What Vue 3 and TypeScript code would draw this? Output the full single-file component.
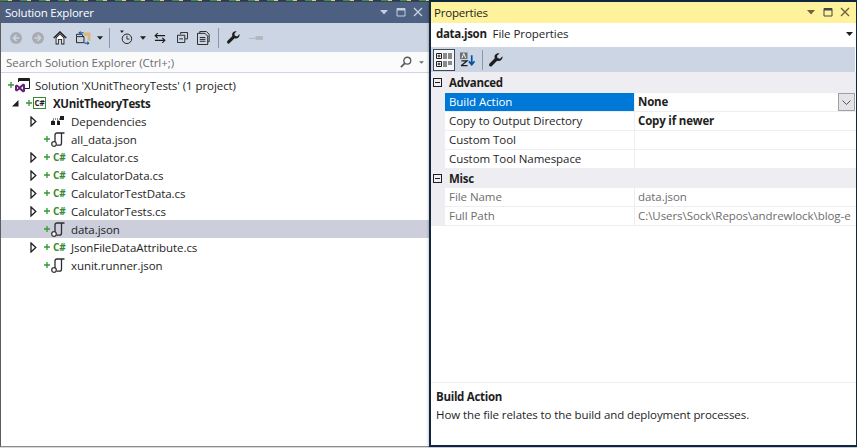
<script setup lang="ts">
interface TreeRow {
  label: string
  level: number
  icon: 'solution' | 'project' | 'deps' | 'json' | 'cs'
  arrow?: 'open' | 'closed'
  plus?: boolean
  bold?: boolean
  selected?: boolean
}

interface PropRow {
  label: string
  value?: string
  selected?: boolean
  strong?: boolean
  muted?: boolean
}

interface PropGroup {
  name: string
  rows: PropRow[]
}

const treeRows: TreeRow[] = [
  { label: "Solution 'XUnitTheoryTests' (1 project)", level: 0, icon: 'solution', plus: true },
  { label: 'XUnitTheoryTests', level: 1, icon: 'project', arrow: 'open', plus: true, bold: true },
  { label: 'Dependencies', level: 2, icon: 'deps', arrow: 'closed' },
  { label: 'all_data.json', level: 2, icon: 'json', plus: true },
  { label: 'Calculator.cs', level: 2, icon: 'cs', arrow: 'closed', plus: true },
  { label: 'CalculatorData.cs', level: 2, icon: 'cs', arrow: 'closed', plus: true },
  { label: 'CalculatorTestData.cs', level: 2, icon: 'cs', arrow: 'closed', plus: true },
  { label: 'CalculatorTests.cs', level: 2, icon: 'cs', arrow: 'closed', plus: true },
  { label: 'data.json', level: 2, icon: 'json', plus: true, selected: true },
  { label: 'JsonFileDataAttribute.cs', level: 2, icon: 'cs', arrow: 'closed', plus: true },
  { label: 'xunit.runner.json', level: 2, icon: 'json', plus: true }
]

const propGroups: PropGroup[] = [
  {
    name: 'Advanced',
    rows: [
      { label: 'Build Action', value: 'None', selected: true, strong: true },
      { label: 'Copy to Output Directory', value: 'Copy if newer', strong: true },
      { label: 'Custom Tool' },
      { label: 'Custom Tool Namespace' }
    ]
  },
  {
    name: 'Misc',
    rows: [
      { label: 'File Name', value: 'data.json', muted: true },
      { label: 'Full Path', value: 'C:\\Users\\Sock\\Repos\\andrewlock\\blog-e', muted: true }
    ]
  }
]
</script>

<template>
  <div class="screen">
    <!-- Solution Explorer -->
    <section class="explorer">
      <div class="top-sliver"></div>
      <header class="title-bar title-bar--dark">
        <span class="title-text">Solution Explorer</span>
        <span class="win-btns">
          <svg width="10" height="10" viewBox="0 0 10 10"><path d="M1 3h8L5 7.500z" fill="#c5cede" /></svg>
          <svg width="10" height="10" viewBox="0 0 10 10"><path d="M1 1.500h8v7.500H1z" fill="none" stroke="#c5cede" /><path d="M1 2.500h8" stroke="#c5cede" stroke-width="2" /></svg>
          <svg width="10" height="10" viewBox="0 0 10 10"><path d="M1 1l8 8M9 1l-8 8" stroke="#c5cede" stroke-width="1.400" /></svg>
        </span>
      </header>
      <div class="toolbar">
        <svg class="tb-ico tb-back" width="12" height="12" viewBox="0 0 14 14"><circle cx="7" cy="7" r="7" fill="#a9adb3" /><path d="M11 7H4.500M7.500 3.500L4 7l3.500 3.500" fill="none" stroke="#ccd5e3" stroke-width="1.800" /></svg>
        <svg class="tb-ico tb-fwd" width="12" height="12" viewBox="0 0 14 14"><circle cx="7" cy="7" r="7" fill="#a9adb3" /><path d="M3 7h6.500M6.500 3.500L10 7l-3.500 3.500" fill="none" stroke="#ccd5e3" stroke-width="1.800" /></svg>
        <svg class="tb-ico tb-home" width="14" height="14" viewBox="0 0 15 15"><path d="M.8 7.600L7.500 1l6.700 6.600" fill="none" stroke="#1e1e1e" stroke-width="1.500" /><path d="M2.800 7v7.500h3.400v-5h2.600v5h3.400V7L7.500 2.500z" fill="#1e1e1e" /><path d="M3.800 7.400v6.100h1.400v-5h4.600v5h1.400V7.400L7.500 3.800z" fill="#fff" /></svg>
        <svg class="tb-ico tb-sync" width="15" height="14" viewBox="0 0 16 15"><path d="M8.500 1.500h7v9h-3V5h-4z" fill="#dcb67a" /><path d="M.5 6V3.500h6l1 2.500h1v6.500h-8z" fill="#ccd5e3" stroke="#1e1e1e" /><path d="M1 6h7" stroke="#1e1e1e" /><path d="M5 0L2.500 2 5 4z" fill="#00539c" /><path d="M5 2h3" stroke="#00539c" stroke-width="1.200" /><path d="M12 15l2.500-2-2.500-2z" fill="#00539c" /><path d="M12 13H9" stroke="#00539c" stroke-width="1.200" /></svg>
        <svg class="tb-ico tb-drop" width="6" height="4" viewBox="0 0 7 4"><path d="M0 0h7L3.500 4z" fill="#1e1e1e" /></svg>
        <i class="tb-sep"></i>
        <svg class="tb-ico tb-clock" width="13" height="15" viewBox="0 0 15 16"><path d="M0 0h4.500L2.200 2.800z" fill="#1e1e1e" /><circle cx="8" cy="9.500" r="5.500" fill="none" stroke="#1e1e1e" stroke-width="1.100" /><path d="M8 6v3.800h3" fill="none" stroke="#1e1e1e" /></svg>
        <svg class="tb-ico tb-drop2" width="6" height="4" viewBox="0 0 7 4"><path d="M0 0h7L3.500 4z" fill="#1e1e1e" /></svg>
        <svg class="tb-ico tb-arrows" width="12" height="12" viewBox="0 0 13 12"><path d="M1 3.500h11M4 .8L1.300 3.500 4 6.200" fill="none" stroke="#1e1e1e" stroke-width="1.300" /><path d="M12 8.500H1M9 5.800l2.700 2.700L9 11.200" fill="none" stroke="#1e1e1e" stroke-width="1.300" /></svg>
        <svg class="tb-ico tb-collapse" width="11" height="11" viewBox="0 0 12 12"><path d="M4 2.500V.5h7.500v7H9" fill="none" stroke="#1e1e1e" /><path d="M.5 3.500h8v8h-8z" fill="#ccd5e3" stroke="#1e1e1e" /><path d="M2.500 7.500h4" stroke="#1e1e1e" /></svg>
        <svg class="tb-ico tb-copies" width="14" height="14" viewBox="0 0 15 15"><path d="M3 2.500V.5h7l3 3v8h-1" fill="none" stroke="#1e1e1e" /><path d="M.5 2.500h8l3 3v9h-11z" fill="#ccd5e3" stroke="#1e1e1e" /><path d="M3 7h6M3 9h6M3 11h6" stroke="#1e1e1e" /></svg>
        <i class="tb-sep tb-sep--second"></i>
        <svg class="tb-ico tb-wrench" width="13" height="13" viewBox="0 0 14 14"><path d="M13.500 3.300L11 5.800 8.500 5 8 2.800 10.500.4C8.500-.3 5.500 1 5.500 3.800c0 .7.100 1.100.3 1.500L.6 10.600c-.8 1-.7 1.800-.1 2.500.7.700 1.600.7 2.400-.1l5.300-5.300c2.800 1 5.800-1 5.300-4.400z" fill="#1e1e1e" /></svg>
        <svg class="tb-ico tb-pin" width="14" height="6" viewBox="0 0 15 6"><path d="M0 3.500h7" stroke="#b3b7bd" /><path d="M7 1h8v4H7z" fill="#b3b7bd" /></svg>
      </div>
      <div class="search">
        <span>Search Solution Explorer (Ctrl+;)</span>
        <span class="search-tail">
          <svg width="12" height="12" viewBox="0 0 14 14"><circle cx="8.500" cy="5.500" r="4" fill="none" stroke="#5a5a5a" stroke-width="1.600" /><path d="M5.500 8.500L1 13" stroke="#5a5a5a" stroke-width="2" /></svg>
          <svg width="5" height="3" viewBox="0 0 6 3"><path d="M0 0h6L3 3z" fill="#6d6d6d" /></svg>
        </span>
      </div>
      <div class="tree">
        <div
          v-for="row in treeRows"
          :key="row.label"
          class="tree-row"
          :class="{ 'tree-row--selected': row.selected, 'tree-row--bold': row.bold }"
          :style="{ paddingLeft: `${5 + row.level * 18}px` }"
        >
          <span v-if="row.arrow" class="arrow">
            <svg v-if="row.arrow === 'open'" width="8" height="8" viewBox="0 0 8 8"><path d="M7.500 1v6.500H1z" fill="#1e1e1e" /></svg>
            <svg v-else width="7" height="11" viewBox="0 0 7 11"><path d="M1 1l4.800 4.500L1 10z" fill="#fff" stroke="#1e1e1e" stroke-width="1.300" /></svg>
          </span>
          <span class="plus">
            <svg v-if="row.plus" width="6" height="6" viewBox="0 0 6 6"><path d="M0 3h6M3 0v6" stroke="#339933" stroke-width="1.300" /></svg>
          </span>
          <span class="row-ico">
            <svg v-if="row.icon === 'solution'" class="sln-ico" width="18" height="16" viewBox="0 0 18 16">
              <path d="M4.500 5V1.500h11v10H11" fill="none" stroke="#1e1e1e" />
              <path d="M4.500 3h11" stroke="#1e1e1e" stroke-width="2" />
              <path d="M1 8.500l2-1 2.500 2L9 6.500l2 1v7l-2 1-3.500-3-2.500 2-2-1zM3 9.800v2.400l1.300-1.200zM9 9.200L7 11l2 1.800z" fill="#68217a" />
            </svg>
            <span v-else-if="row.icon === 'project'" class="cs-box">C#</span>
            <svg v-else-if="row.icon === 'deps'" width="13" height="10" viewBox="0 0 13 10">
              <path d="M0 5h4v4H0zM6 5h3v4H6zM9 0h4v4H9z" fill="#1e1e1e" />
              <path d="M2 5V3h8M7 5V3" stroke="#1e1e1e" stroke-dasharray="1 1" fill="none" />
            </svg>
            <svg v-else-if="row.icon === 'json'" width="14" height="15" viewBox="0 0 14 15">
              <path d="M4 10V3C4 1.600 4.800 1 6 1h7.500M10.500 1.200V11c0 1.400-.8 2.200-2 2.200H5.500" fill="none" stroke="#2d2d2d" stroke-width="1.300" />
              <circle cx="3" cy="12" r="2.300" fill="#fff" stroke="#3c3c3c" stroke-width="1.300" />
            </svg>
            <span v-else class="cs-text">C#</span>
          </span>
          <span class="row-label">{{ row.label }}</span>
        </div>
      </div>
    </section>

    <!-- Properties -->
    <section class="props">
      <header class="title-bar title-bar--active">
        <span class="title-text">Properties</span>
        <span class="win-btns">
          <svg width="10" height="10" viewBox="0 0 10 10"><path d="M1 3h8L5 7.500z" fill="#6b6340" /></svg>
          <svg width="10" height="10" viewBox="0 0 10 10"><path d="M1 1.500h8v7.500H1z" fill="none" stroke="#454545" /><path d="M1 2.500h8" stroke="#454545" stroke-width="2" /></svg>
          <svg width="10" height="10" viewBox="0 0 10 10"><path d="M1 1l8 8M9 1l-8 8" stroke="#6b6340" stroke-width="1.400" /></svg>
        </span>
      </header>
      <div class="target">
        <span><b>data.json</b>&nbsp; File Properties</span>
        <svg width="7" height="4" viewBox="0 0 7 4"><path d="M0 0h7L3.500 4z" fill="#1e1e1e" /></svg>
      </div>
      <div class="prop-tools">
        <span class="prop-tool prop-tool--on">
          <svg width="16" height="14" viewBox="0 0 16 14">
            <path d="M.5.500h5v5h-5zM.5 8.500h5v5h-5z" fill="#fff" stroke="#1e1e1e" />
            <path d="M1.500 3h3M3 1.500v3M1.500 11h3M3 9.500v3" stroke="#1e1e1e" />
            <path d="M7 1h9M7 3h9M7 5h9M7 9h9M7 11h9M7 13h5" stroke="#1e1e1e" stroke-dasharray="4 1" />
          </svg>
        </span>
        <svg class="az" width="15" height="15" viewBox="0 0 16 15">
          <rect width="8" height="7" fill="#6d6f73" />
          <path d="M1 14h7M1.500 9h6L1.500 14" fill="none" stroke="#1e1e1e" stroke-width="1.400" />
          <path d="M2 6l2-5 2 5" fill="none" stroke="#fff" />
          <path d="M12.500 3v10M9.500 9.500l3 3.500 3-3.500" fill="none" stroke="#00539c" stroke-width="1.800" />
        </svg>
        <i class="tb-sep prop-sep"></i>
        <svg class="prop-wrench" width="14" height="14" viewBox="0 0 14 14"><path d="M13.500 3.300L11 5.800 8.500 5 8 2.800 10.500.4C8.500-.3 5.500 1 5.500 3.800c0 .7.100 1.100.3 1.500L.6 10.600c-.8 1-.7 1.800-.1 2.500.7.700 1.600.7 2.400-.1l5.300-5.300c2.800 1 5.800-1 5.300-4.400z" fill="#1e1e1e" /></svg>
      </div>
      <div class="grid">
        <template v-for="group in propGroups" :key="group.name">
          <div class="group-row">
            <span class="minus"></span>
            <b>{{ group.name }}</b>
          </div>
          <div
            v-for="row in group.rows"
            :key="row.label"
            class="prop-row"
            :class="{ 'prop-row--muted': row.muted }"
          >
            <span class="prop-name" :class="{ 'prop-name--selected': row.selected }">{{ row.label }}</span>
            <span class="prop-value" :class="{ 'prop-value--strong': row.strong }">
              <span class="prop-value-text">{{ row.value }}</span>
              <span v-if="row.selected" class="combo">
                <svg width="9" height="5" viewBox="0 0 9 5"><path d="M.5.500l4 4 4-4" fill="none" stroke="#555" /></svg>
              </span>
            </span>
          </div>
        </template>
      </div>
      <div class="desc">
        <b>Build Action</b>
        <span class="desc-text">How the file relates to the build and deployment processes.</span>
      </div>
    </section>
  </div>
</template>

<style>
html,
body {
  margin: 0;
  background: #d3d9e1;
}
</style>

<style scoped>
.screen {
  width: 857px;
  height: 448px;
  overflow: hidden;
  display: flex;
  align-items: flex-start;
  font-family: "Open Sans", "Liberation Sans", sans-serif;
  font-size: 11.5px;
  letter-spacing: -0.06px;
  color: #1e1e1e;
  background: #d3d9e1;
}

b {
  letter-spacing: -0.3px;
}

.title-text {
  letter-spacing: -0.2px;
}

.explorer {
  width: 429px;
  height: 447px;
  flex: none;
  display: flex;
  flex-direction: column;
  background: #fff;
  border-left: 1px solid #5c5c5c;
  border-bottom: 1px solid #8d8d8d;
  box-sizing: border-box;
}

.top-sliver {
  height: 1px;
  flex: none;
  background: repeating-linear-gradient(90deg, #3f8f3f 0 7px, #d8d36a 7px 11px, #2e3a4c 11px 19px);
  border-bottom: 1px solid #33415a;
}

.props {
  width: 428px;
  height: 447px;
  flex: none;
  display: flex;
  flex-direction: column;
  background: #fff;
  border: 1px solid #10263f;
  border-width: 2px 1px 2px 2px;
  box-sizing: border-box;
  box-shadow: -1px 0 2px rgba(0, 0, 0, 0.2);
}

.title-bar {
  height: 21px;
  flex: none;
  display: flex;
  align-items: center;
  justify-content: space-between;
  padding: 0 6px 1px 3px;
  box-sizing: border-box;
}

.title-bar--dark {
  background: #4d6082;
  color: #fff;
  padding-left: 4px;
}

.title-bar--active {
  background: #fff29d;
  color: #1e1e1e;
}

.win-btns {
  display: flex;
  gap: 7px;
  align-items: center;
}

.toolbar {
  height: 29px;
  flex: none;
  display: flex;
  align-items: center;
  background: #ccd5e3;
}

.tb-ico {
  display: block;
  flex: none;
}

.tb-back { margin-left: 9px; }
.tb-fwd { margin-left: 10px; }
.tb-home { margin-left: 9px; }
.tb-sync { margin-left: 9px; }
.tb-drop { margin-left: 6px; }
.tb-clock { margin-left: 10px; }
.tb-drop2 { margin-left: 7px; }
.tb-arrows { margin-left: 8px; }
.tb-collapse { margin-left: 11px; }
.tb-copies { margin-left: 9px; }
.tb-wrench { margin-left: 8px; }
.tb-pin { margin-left: 9px; }

.tb-sep {
  display: block;
  flex: none;
  width: 1px;
  height: 20px;
  background: #8a97aa;
  margin-left: 6px;
}

.tb-sep--second {
  margin-left: 7px;
}

.search {
  height: 21px;
  flex: none;
  display: flex;
  align-items: center;
  justify-content: space-between;
  padding: 0 5px 0 5px;
  box-sizing: border-box;
  background: #fbfbfc;
  border-bottom: 1px solid #ccd5e3;
  color: #6d6d6d;
}

.search-tail {
  display: flex;
  align-items: center;
  gap: 7px;
}

.tree {
  flex: 1;
  padding-top: 3px;
}

.tree-row {
  height: 18px;
  display: flex;
  align-items: center;
  white-space: nowrap;
  box-sizing: border-box;
}

.tree-row--selected {
  background: #ccceDB;
}

.row-label {
  padding-top: 1px;
}

.tree-row--bold .row-label {
  font-weight: 700;
  letter-spacing: -0.3px;
}

.arrow {
  width: 18px;
  margin-left: -18px;
  display: flex;
  align-items: center;
  justify-content: center;
  flex: none;
}

.plus {
  width: 9px;
  flex: none;
  display: flex;
  align-items: center;
  padding-left: 2px;
  box-sizing: border-box;
}

.row-ico {
  width: 20px;
  flex: none;
  display: flex;
  align-items: center;
}

.sln-ico {
  margin-left: -1px;
}

.cs-box {
  width: 11px;
  height: 10px;
  border: 1px solid #388a34;
  font-size: 8px;
  font-weight: 700;
  line-height: 10px;
  text-align: center;
  color: #1e1e1e;
  box-sizing: content-box;
}

.cs-text {
  margin-left: 2px;
  color: #388a34;
  font-size: 10px;
  font-weight: 700;
  line-height: 1;
}

.target {
  height: 24px;
  flex: none;
  display: flex;
  align-items: center;
  justify-content: space-between;
  padding: 0 3px 3px 5px;
  box-sizing: border-box;
}

.prop-tools {
  height: 25px;
  flex: none;
  display: flex;
  align-items: center;
  background: #ccd5e3;
  margin-right: 1px;
}

.prop-tool {
  width: 22px;
  height: 22px;
  margin-left: 2px;
  display: flex;
  align-items: center;
  justify-content: center;
  box-sizing: border-box;
}

.prop-tool--on {
  border: 1px solid #3e4a5c;
  background: #f5f6f8;
}

.az {
  margin-left: 5px;
}

.prop-sep {
  margin-left: 7px;
}

.prop-wrench {
  margin-left: 6px;
}

.grid {
  flex: 1;
  background: #fff;
}

.group-row {
  height: 19px;
  display: flex;
  align-items: center;
  background: #eeeef2;
  padding-left: 2px;
}

.group-row:first-child {
  height: 21px;
}

.minus {
  width: 7px;
  height: 7px;
  border: 1px solid #1e1e1e;
  margin-right: 7px;
  position: relative;
  box-sizing: content-box;
}

.minus::after {
  content: "";
  position: absolute;
  left: 1px;
  right: 1px;
  top: 3px;
  height: 1px;
  background: #1e1e1e;
}

.prop-row {
  height: 19px;
  display: flex;
  margin-left: 14px;
  box-shadow: -14px 0 0 #eeeef2;
  border-bottom: 1px solid #eeeef2;
  box-sizing: border-box;
}

.prop-row--muted {
  color: #6d6d6d;
}

.prop-name {
  width: 189px;
  flex: none;
  padding-left: 4px;
  box-sizing: border-box;
  line-height: 17px;
  white-space: nowrap;
}

.prop-name--selected {
  background: #0078d7;
  color: #fff;
}

.prop-value {
  flex: 1;
  min-width: 0;
  display: flex;
  justify-content: space-between;
  padding-left: 3px;
  border-left: 1px solid #eeeef2;
  line-height: 17px;
  white-space: nowrap;
}

.prop-value--strong {
  font-weight: 700;
  letter-spacing: -0.18px;
}

.combo {
  width: 17px;
  height: 18px;
  flex: none;
  margin-right: 1px;
  display: flex;
  align-items: center;
  justify-content: center;
  box-sizing: border-box;
  background: #e4e4e8;
  border: 1px solid #a0a0a0;
}

.desc {
  height: 63px;
  flex: none;
  display: flex;
  flex-direction: column;
  box-sizing: border-box;
  padding: 5px 5px 0;
  border-top: 1px solid #eeeef2;
  line-height: 18px;
}

.desc-text {
  letter-spacing: -0.09px;
}
</style>
